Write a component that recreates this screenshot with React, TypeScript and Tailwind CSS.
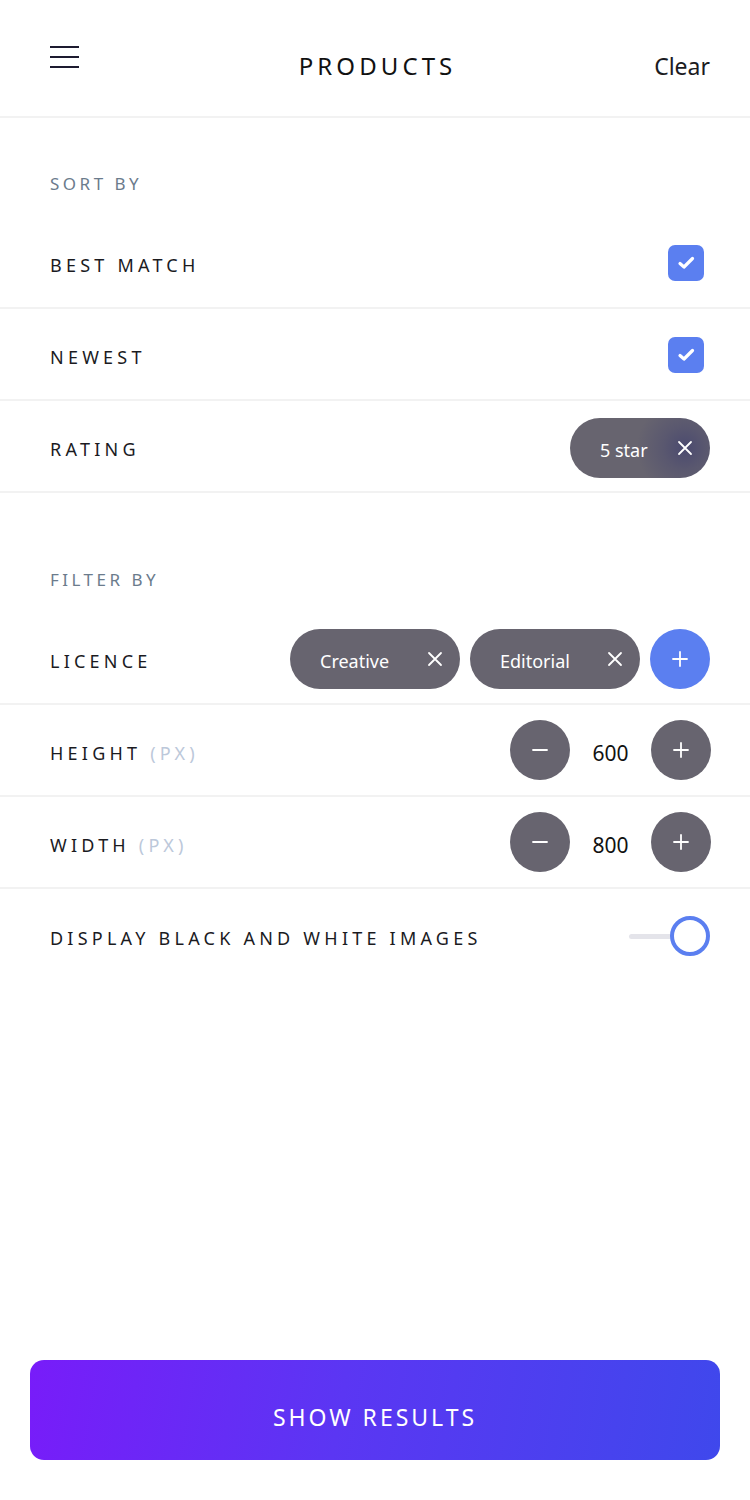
import React from "react";

const font = { fontFamily: '"Noto Sans", "Open Sans", sans-serif' };

function Check() {
  return (
    <div className="w-[36px] h-[36px] mr-[6px] mt-[2px] rounded-[7px] bg-[#5b7ff0] flex items-center justify-center">
      <svg width="26" height="26" viewBox="0 0 26 26" fill="none">
        <path d="M7 13.5 L11 17 L19.5 8.5" stroke="white" strokeWidth="3.2" strokeLinecap="round" strokeLinejoin="round" />
      </svg>
    </div>
  );
}

function XIcon() {
  return (
    <svg width="16" height="16" viewBox="0 0 16 16" fill="none">
      <path d="M2 2 L14 14 M14 2 L2 14" stroke="white" strokeWidth="1.8" strokeLinecap="round" />
    </svg>
  );
}

function PlusIcon() {
  return (
    <svg width="18" height="18" viewBox="0 0 18 18" fill="none">
      <path d="M9 2 V16 M2 9 H16" stroke="white" strokeWidth="1.8" strokeLinecap="round" />
    </svg>
  );
}

function MinusIcon() {
  return (
    <svg width="18" height="18" viewBox="0 0 18 18" fill="none">
      <path d="M2 9 H16" stroke="white" strokeWidth="1.8" strokeLinecap="round" />
    </svg>
  );
}

function Chip({ label, width, glow }: { label: string; width: string; glow?: boolean }) {
  return (
    <div
      className={`${width} h-[60px] rounded-full bg-[#67646f] flex items-center justify-between pl-[30px] pr-[17px] text-white text-[18px]`}
      style={
        glow
          ? { backgroundImage: "radial-gradient(circle at 82% 50%, #4b4a6f 0px, #5a586f 22px, rgba(103,100,111,0) 48px)" }
          : undefined
      }
    >
      <span className="pt-[5px]">{label}</span>
      <XIcon />
    </div>
  );
}

function Row({ children, right, border = true }: { children: React.ReactNode; right: React.ReactNode; border?: boolean }) {
  return (
    <div className={`h-[92px] flex items-center justify-between pl-[50px] pr-[40px] ${border ? "border-b-2 border-[#f2f2f2]" : ""}`}>
      <div className="pt-[7px] text-[18px] tracking-[0.235em] text-[#1b1b1f]">{children}</div>
      {right}
    </div>
  );
}

function Stepper({ value }: { value: string }) {
  return (
    <div className="flex items-center mr-[-1px]">
      <div className="w-[60px] h-[60px] rounded-full bg-[#67646f] flex items-center justify-center">
        <MinusIcon />
      </div>
      <div className="w-[81px] pt-[7px] text-center text-[21px] text-[#111]">{value}</div>
      <div className="w-[60px] h-[60px] rounded-full bg-[#67646f] flex items-center justify-center">
        <PlusIcon />
      </div>
    </div>
  );
}

export default function App() {
  return (
    <div className="w-[750px] h-[1500px] bg-white flex flex-col" style={font}>
      <header className="h-[118px] flex items-center justify-between pl-[50px] pr-[40px] border-b-2 border-[#f2f2f2] pt-[16px]">
        <div className="flex flex-col gap-[8px] w-[29px] -mt-[18px]">
          <div className="h-[2px] bg-[#1d1b30]" />
          <div className="h-[2px] bg-[#1d1b30]" />
          <div className="h-[2px] bg-[#1d1b30]" />
        </div>
        <div className="text-[24px] tracking-[0.17em] text-[#111] pl-[22px]">PRODUCTS</div>
        <div className="text-[23px] text-[#1b1b22]">Clear</div>
      </header>

      <div className="h-[99px] pl-[50px] pt-[53px] text-[17px] tracking-[0.205em] text-[#6b7b8c]">SORT BY</div>
      <Row right={<Check />}>BEST MATCH</Row>
      <Row right={<Check />}>NEWEST</Row>
      <Row right={<div className="mt-[3px]"><Chip label="5 star" width="w-[140px]" glow /></div>}>RATING</Row>

      <div className="h-[120px] pl-[50px] pt-[74px] text-[17px] tracking-[0.205em] text-[#6b7b8c]">FILTER BY</div>
      <Row
        right={
          <div className="flex items-center gap-[10px] mt-[2px]">
            <Chip label="Creative" width="w-[170px]" />
            <Chip label="Editorial" width="w-[170px]" />
            <div className="w-[60px] h-[60px] rounded-full bg-[#5b7ff0] flex items-center justify-center">
              <PlusIcon />
            </div>
          </div>
        }
      >
        LICENCE
      </Row>
      <Row right={<Stepper value="600" />}>
        HEIGHT <span className="text-[#bcc8da]">(PX)</span>
      </Row>
      <Row right={<Stepper value="800" />}>
        WIDTH <span className="text-[#bcc8da]">(PX)</span>
      </Row>
      <Row
        border={false}
        right={
          <div className="flex items-center mt-[2px]">
            <div className="w-[50px] h-[5px] rounded-full bg-[#e4e4ea] -mr-[9px]" />
            <div className="w-[40px] h-[40px] rounded-full border-[4px] border-[#5b7ff0] bg-white relative" />
          </div>
        }
      >
        DISPLAY BLACK AND WHITE IMAGES
      </Row>

      <div className="flex-1" />
      <div className="px-[30px] pb-[40px]">
        <button
          className="w-full h-[100px] pt-[14px] rounded-[14px] text-white text-[23px] tracking-[0.13em] flex items-center justify-center"
          style={{ backgroundImage: "linear-gradient(100deg, #781cf9 0%, #5b36f3 45%, #3f48ec 100%)" }}
        >
          SHOW RESULTS
        </button>
      </div>
    </div>
  );
}
